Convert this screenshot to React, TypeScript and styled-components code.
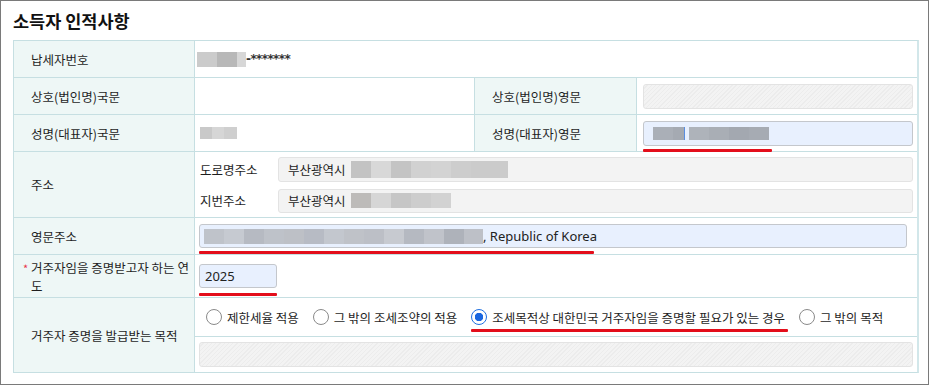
import styled, { createGlobalStyle } from "styled-components";

const GlobalStyle = createGlobalStyle`
  html, body {
    margin: 0;
    padding: 0;
    background: #fff;
  }
  body {
    font-family: "Noto Sans", "Noto Sans CJK KR", sans-serif;
    color: #222;
  }
`;

type Block = [string, number];

const road: Block[] = [
  ["#c3c3c3", 20], ["#d8d8d8", 20], ["#c4c4c4", 20], ["#d1d1d1", 20],
  ["#d3d3d3", 20], ["#cdcdcd", 20], ["#cbcbcb", 37],
];
const lot: Block[] = [
  ["#bdbbb9", 20], ["#d6d6d6", 20], ["#c6c6c6", 20], ["#cdcdcd", 20], ["#d2d2d2", 20],
];
const engAddr: Block[] = [
  ["#bfc3ca", 20], ["#c6cad1", 20], ["#b6bac2", 20], ["#bec2c9", 20], ["#bdc0c6", 20],
  ["#b7bbc4", 20], ["#c3c7ce", 20], ["#bfc2c8", 20], ["#bcbfc6", 20], ["#c7cad0", 20],
  ["#b5b9c1", 20], ["#c0c3ca", 20], ["#aeb2ba", 20], ["#bdc0c7", 19],
];
const engName: Block[] = [
  ["#aaafb7", 20], ["#a5aab2", 11], ["#5a8ee0", 1], ["#e8f0fe", 4], ["#aeb3ba", 20],
  ["#a9aeb5", 20], ["#a3a8b0", 20], ["#a6abb3", 20],
];

const radios = [
  { label: "제한세율 적용", checked: false },
  { label: "그 밖의 조세조약의 적용", checked: false },
  { label: "조세목적상 대한민국 거주자임을 증명할 필요가 있는 경우", checked: true, mark: 317 },
  { label: "그 밖의 목적", checked: false },
];

const Mosaic = ({ blocks, h }: { blocks: Block[]; h: number }) => (
  <MosaicRow>
    {blocks.map(([c, w], i) => (
      <span key={i} style={{ background: c, width: w, height: h }} />
    ))}
  </MosaicRow>
);

const App = () => {
  return (
    <>
      <GlobalStyle />
      <Frame>
        <Title>소득자 인적사항</Title>
        <Sheet>
          <Label>납세자번호</Label>
          <Value $span={3} $pl={2}>
            <Mosaic blocks={[["#cbcbcb", 20], ["#b8b8b8", 20], ["#d7d7d7", 9]]} h={15} />
            <Masked>-*******</Masked>
          </Value>

          <Label>상호(법인명)국문</Label>
          <Value />
          <Label>상호(법인명)영문</Label>
          <Value $pl={6}>
            <Field $kind="hatch" />
          </Value>

          <Label>성명(대표자)국문</Label>
          <Value $pl={5}>
            <Mosaic blocks={[["#c9c9c9", 12], ["#d6d6d6", 12], ["#cfcfcf", 13]]} h={12} />
          </Value>
          <Label>성명(대표자)영문</Label>
          <Value $pl={6}>
            <Marked>
              <Field $kind="filled" $pl={9}>
                <Mosaic blocks={engName} h={13} />
              </Field>
              <RedLine $w={129} $gap={3} />
            </Marked>
          </Value>

          <Label>주소</Label>
          <Value $span={3} $pl={5}>
            <AddrGrid>
              <SubLabel>도로명주소</SubLabel>
              <Field $kind="plain" $pl={9}>
                <span>부산광역시</span>
                <Mosaic blocks={road} h={17} />
              </Field>
              <SubLabel>지번주소</SubLabel>
              <Field $kind="plain" $pl={9} $h={24}>
                <span>부산광역시</span>
                <Mosaic blocks={lot} h={15} />
              </Field>
            </AddrGrid>
          </Value>

          <Label>영문주소</Label>
          <Value $span={3} $pl={4} $pr={10}>
            <Marked>
              <Field $kind="filled" $pl={4} $h={24}>
                <Mosaic blocks={engAddr} h={15} />
                <EngText>, Republic of Korea</EngText>
              </Field>
              <RedLine $w={395} $gap={3} />
            </Marked>
          </Value>

          <Label>
            <Req>*</Req>거주자임을 증명받고자 하는 연도
          </Label>
          <Value $span={3} $pl={4}>
            <Marked $w={78}>
              <Field $kind="filled" $pl={10} $h={24}>
                <EngText>2025</EngText>
              </Field>
              <RedLine $w={78} $gap={5} />
            </Marked>
          </Value>

          <Label $rows={2}>거주자 증명을 발급받는 목적</Label>
          <Value $span={3} $pl={11}>
            <RadioRow>
              {radios.map((r) => (
                <Marked key={r.label} $w={0}>
                  <RadioItem>
                    <RadioMark $checked={r.checked} />
                    {r.label}
                  </RadioItem>
                  {r.mark && <RedLine $w={r.mark} $gap={3} />}
                </Marked>
              ))}
            </RadioRow>
          </Value>
          <Value $span={3} $pl={4} $top>
            <Field $kind="hatch" />
          </Value>
        </Sheet>
      </Frame>
    </>
  );
};

const Frame = styled.div`
  box-sizing: border-box;
  width: 929px;
  height: 385px;
  border: 1px solid #7a7a7a;
  padding: 8px 0 0 12px;
`;

const Title = styled.h2`
  margin: 0 0 7px;
  font-family: "Noto Sans CJK KR", sans-serif;
  font-size: 17.5px;
  font-weight: 700;
  line-height: 24px;
  color: #111;
`;

const Sheet = styled.div`
  display: grid;
  grid-template-columns: 180px 279px 161px 280px;
  grid-template-rows: 36px 36px 36px 65px 36px 42px 38px 35px;
  gap: 1px;
  width: 903px;
  border: 1px solid #c6dfe2;
  border-right: 2px solid #d2e7ea;
  background: #c6dfe2;
`;

const Label = styled.div<{ $rows?: number }>`
  grid-row: span ${(p) => p.$rows ?? 1};
  display: block;
  align-content: center;
  padding: 0 4px 0 17px;
  background: #eef7f6;
  font-family: "Noto Sans CJK KR", sans-serif;
  font-size: 12.5px;
  line-height: 17px;
  color: #1e1e1e;
`;

const Req = styled.span`
  display: inline-block;
  width: 8px;
  margin-left: -8px;
  color: #e8334a;
  font-size: 11px;
`;

const Value = styled.div<{ $span?: number; $pl?: number; $pr?: number; $top?: boolean }>`
  grid-column: span ${(p) => p.$span ?? 1};
  display: flex;
  align-items: ${(p) => (p.$top ? "flex-start" : "center")};
  padding: ${(p) => (p.$top ? "5px" : "0")} ${(p) => p.$pr ?? 4}px 0 ${(p) => p.$pl ?? 4}px;
  background: #fff;
  min-width: 0;
`;

const MosaicRow = styled.span`
  display: inline-flex;
  align-items: center;

  span {
    display: block;
  }
`;

const Masked = styled.span`
  font-family: "DejaVu Sans", sans-serif;
  font-size: 12px;
  font-weight: 700;
  letter-spacing: -0.6px;
  color: #333;
`;

const Field = styled.div<{ $kind: "hatch" | "filled" | "plain"; $pl?: number; $h?: number }>`
  box-sizing: border-box;
  display: flex;
  align-items: center;
  width: 100%;
  height: ${(p) => p.$h ?? 25}px;
  padding-left: ${(p) => p.$pl ?? 8}px;
  border-radius: 3px;
  font-family: "Noto Sans CJK KR", sans-serif;
  font-size: 12.5px;
  color: #222;
  gap: 5px;
  border: 1px solid ${(p) => (p.$kind === "filled" ? "#c4c7cc" : "#e3e3e3")};
  background: ${(p) =>
    p.$kind === "filled"
      ? "#e8f0fe"
      : p.$kind === "plain"
      ? "#f3f3f3"
      : "repeating-linear-gradient(135deg, #f3f3f3 0 2px, #ececec 2px 3px)"};
`;

const EngText = styled.span`
  font-family: "Noto Sans", sans-serif;
  font-size: 13px;
  color: #222;
  margin-left: -5px;
  white-space: nowrap;
`;

const Marked = styled.div<{ $w?: number }>`
  position: relative;
  display: flex;
  flex: ${(p) => (p.$w !== undefined ? `0 0 ${p.$w || "auto"}${p.$w ? "px" : ""}` : "1 1 auto")};
`;

const RedLine = styled.span<{ $w: number; $gap: number }>`
  position: absolute;
  left: 0;
  top: calc(100% + ${(p) => p.$gap}px);
  width: ${(p) => p.$w}px;
  height: 3px;
  border-radius: 1px;
  background: #e30e1b;
`;

const AddrGrid = styled.div`
  display: grid;
  grid-template-columns: 78px 1fr;
  row-gap: 7px;
  align-items: center;
  width: 100%;
`;

const SubLabel = styled.span`
  font-family: "Noto Sans CJK KR", sans-serif;
  font-size: 12.5px;
  color: #1e1e1e;
`;

const RadioRow = styled.div`
  display: flex;
  align-items: center;
  gap: 14px;
`;

const RadioItem = styled.label`
  display: flex;
  align-items: center;
  gap: 5px;
  font-family: "Noto Sans CJK KR", sans-serif;
  font-size: 12.5px;
  line-height: 17px;
  color: #1e1e1e;
  white-space: nowrap;
`;

const RadioMark = styled.span<{ $checked: boolean }>`
  box-sizing: border-box;
  width: 16px;
  height: 16px;
  border-radius: 50%;
  border: 1px solid ${(p) => (p.$checked ? "#1f6fe0" : "#8a8a8a")};
  background: ${(p) =>
    p.$checked ? "radial-gradient(circle, #1a66e0 0 4px, #fff 4.5px)" : "#fff"};
`;

export default App;
